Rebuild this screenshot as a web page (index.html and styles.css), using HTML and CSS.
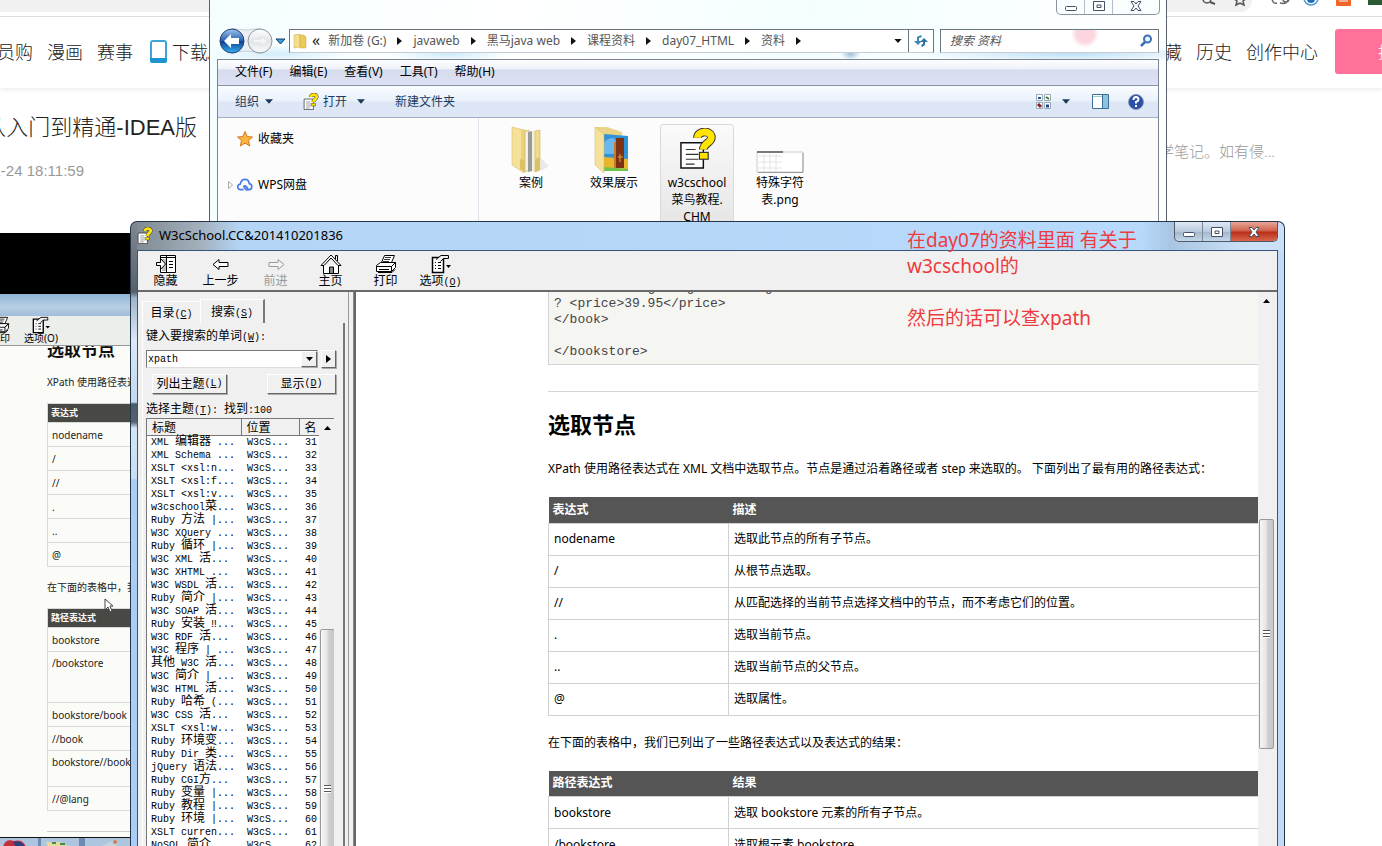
FILE: index.html
```html
<!DOCTYPE html>
<html lang="zh-CN">
<head>
<meta charset="utf-8">
<title>W3cSchool.CC</title>
<link rel="stylesheet" href="styles.css">
</head>
<body>
<svg class="defs" aria-hidden="true">
  <symbol id="chm" viewBox="0 0 38 42">
    <path d="M2 15h23v26H2z" fill="#fff" stroke="#111" stroke-width="1.500"/>
    <path d="M7 22h10M7 27h13M7 32h13M7 37h9" stroke="#333" stroke-width="1.200"/>
    <path d="M19 10C19 3 31 2 33 8c2 7-8 7-8 14" fill="none" stroke="#333" stroke-width="9"/>
    <path d="M19 10C19 3 31 2 33 8c2 7-8 7-8 14" fill="none" stroke="#ffe500" stroke-width="7"/>
    <rect x="21" y="25" width="9" height="7" fill="#ffe500" stroke="#333" stroke-width="1.200"/>
  </symbol>
  <symbol id="print" viewBox="0 0 22 20">
    <path d="M6.500 8.500l3-7h10l-3 7z" fill="#fff" stroke="#000"/>
    <path d="M10 3.500h6M9 5.500h6M8 7.500h6" stroke="#333"/>
    <path d="M1.500 11.500l4-3h15l-4 4v5h-15zM16.500 12.500l4-4v5l-4 4M1.500 12.500h15" fill="#fff" stroke="#000"/>
    <path d="M4 15.500h10M3 18.500h14l3-3" fill="none" stroke="#000"/>
  </symbol>
  <symbol id="options" viewBox="0 0 22 20">
    <path d="M2.500 3.500h11v15h-11z" fill="#fff" stroke="#000" stroke-width="1.500"/>
    <path d="M5 8.500h1M8 8.500h3M5 11.500h1M8 11.500h3M5 14.500h1M8 14.500h3" stroke="#000"/>
    <path d="M6 5.500l5-4h7.500v3h-5l-3 3" fill="#eee" stroke="#000"/>
    <path d="M16 11h5l-2.500 3z"/>
  </symbol>
  <symbol id="winmin" viewBox="0 0 14 12"><rect x="1.500" y="6.500" width="11" height="4" rx="1" fill="#fff" stroke="#445066"/></symbol>
  <symbol id="winmax" viewBox="0 0 14 12"><path d="M1.500 1.500h11v9h-11zM5 5h4v2.500H5z" fill="#fff" stroke="#445066"/></symbol>
  <symbol id="winx" viewBox="0 0 14 12"><path d="M2 1.500h3L7 4l2-2.500h3L9 6l3 4.500H9L7 8l-2 2.500H2L5 6z" fill="#fff" stroke="#445066"/></symbol>
  <symbol id="tri" viewBox="0 0 5 8"><path d="M0 0l5 4-5 4z"/></symbol>
  <symbol id="down" viewBox="0 0 9 5"><path d="M0 0h9L4.500 5z"/></symbol>
  <symbol id="up" viewBox="0 0 9 5"><path d="M0 5h9L4.500 0z"/></symbol>
</svg>

<div class="site">
  <div class="chrome">
    <div class="pill"></div>
    <svg class="ext" viewBox="0 0 200 14" aria-hidden="true">
      <circle cx="25" cy="-1" r="4" fill="none" stroke="#555" stroke-width="1.500"/><path d="M28 2l5 2" stroke="#555" stroke-width="2"/>
      <path d="M58-7l2 5h5l-4 3 1 4-4-2-4 2 1-4-4-3h5z" fill="none" stroke="#555" stroke-width="1.500"/>
      <path d="M90-1q1 5 5 4M98 3q8 2 8-5M101-1a3 3 0 0 1 6 0a3 3 0 0 1-6 0" fill="none" stroke="#666" stroke-width="1.500"/>
      <circle cx="129" cy="-2" r="7" fill="#fff" stroke="#4a9ad4" stroke-width="1.500"/><circle cx="129" cy="-1" r="4" fill="#1c6fb8"/>
      <rect x="154" y="-8" width="15" height="14" rx="1" fill="#f0652a"/><path d="M157 1h9M157-2h9" stroke="#fff"/>
      <rect x="186" y="-8" width="16" height="13" fill="#2c5a34"/>
    </svg>
  </div>
  <nav class="topnav">
    <div class="navleft">
      <a href="#">会员购</a><a href="#">漫画</a><a href="#">赛事</a>
      <a href="#" class="dl"><svg viewBox="0 0 17 23" width="17" height="23" aria-hidden="true"><rect x="1" y="1" width="15" height="20" rx="2" fill="#fff" stroke="#3da4d8" stroke-width="2"/><path d="M0 18h17v3q0 2-2 2H2q-2 0-2-2z" fill="#1b95cf"/></svg>下载App</a>
    </div>
    <div class="navright">
      <a href="#">收藏</a><a href="#">历史</a><a href="#">创作中心</a>
      <button class="post" type="button">投稿</button>
    </div>
  </nav>
  <header class="intro">
    <div class="introleft">
      <h1>从入门到精通-IDEA版</h1>
      <time>2020-11-24 18:11:59</time>
    </div>
    <p class="note">学笔记。如有侵...</p>
  </header>
  <section class="video">
    <div class="vbar"></div>
    <div class="vtitle"></div>
    <div class="vtools">
      <div class="vtool"><svg width="20" height="18"><use href="#print"/></svg><span>打印</span></div>
      <div class="vtool"><svg width="20" height="18"><use href="#options"/></svg><span>选项(O)</span></div>
    </div>
    <div class="vpage">
      <h3>选取节点</h3>
      <p>XPath 使用路径表达</p>
      <table>
        <thead><tr><th>表达式</th></tr></thead>
        <tbody><tr><td>nodename</td></tr><tr><td>/</td></tr><tr><td>//</td></tr><tr><td>.</td></tr><tr><td>..</td></tr><tr><td>@</td></tr></tbody>
      </table>
      <p>在下面的表格中，我</p>
      <table>
        <thead><tr><th>路径表达式</th></tr></thead>
        <tbody><tr><td>bookstore</td></tr><tr class="tall"><td>/bookstore</td></tr><tr><td>bookstore/book</td></tr><tr><td>//book</td></tr><tr class="mid"><td>bookstore//book</td></tr><tr><td>//@lang</td></tr></tbody>
      </table>
      <hr>
      <svg class="cursor" viewBox="0 0 10 15" width="10" height="15" aria-hidden="true"><path d="M1 1v11l3-3 2 5 2-1-2-5h3z" fill="#fff" stroke="#444"/></svg>
    </div>
    <div class="vtask"><div></div><div></div><div></div>
      <svg viewBox="0 0 130 9" width="130" height="9" aria-hidden="true"><path d="M3 9q2-9 11-6 9-2 12 6z" fill="#c22f3f"/><path d="M13 4q9-2 12 5H16z" fill="#27407f"/><path d="M46 4h14l10 5H48z" fill="#e5dc9b"/><path d="M52 5h4M60 6h5" stroke="#3d8a52" stroke-width="2"/><path d="M100 9l8-4 6-3 4 3-3 4z" fill="#c4d3dc"/><circle cx="115" cy="4" r="2" fill="#c9805a"/></svg>
    </div>
  </section>
</div>

<section class="explorer" aria-label="资料">
  <div class="controls light">
    <button type="button" aria-label="最小化"><svg width="14" height="12"><use href="#winmin"/></svg></button>
    <button type="button" aria-label="最大化"><svg width="14" height="12"><use href="#winmax"/></svg></button>
    <button type="button" class="wide" aria-label="关闭"><svg width="14" height="12"><use href="#winx"/></svg></button>
  </div>
  <div class="address">
    <svg class="backfwd" viewBox="0 0 68 28" width="68" height="28" aria-hidden="true">
      <defs><linearGradient id="ball" x1="0" y1="0" x2="0" y2="1"><stop offset="0" stop-color="#9dc4ee"/><stop offset=".48" stop-color="#2a62b4"/><stop offset=".52" stop-color="#0d3f94"/><stop offset="1" stop-color="#35b4f5"/></linearGradient>
      <linearGradient id="ghost" x1="0" y1="0" x2="0" y2="1"><stop offset="0" stop-color="#fff"/><stop offset=".5" stop-color="#e2e6ea"/><stop offset="1" stop-color="#f8f8f8"/></linearGradient></defs>
      <path d="M14 1.500q14 3 28 0v25q-14-5-28 0z" fill="#eceff3" stroke="#9aa" stroke-width=".5"/>
      <circle cx="14" cy="14" r="12" fill="url(#ball)" stroke="#28406e"/><path d="M6 14l7-7v4h8v6h-8v4z" fill="#fff"/>
      <circle cx="42" cy="14" r="12" fill="url(#ghost)" stroke="#8d949c"/><path d="M35 12h8V9l7 5-7 5v-3h-8z" fill="#f3f5f7" stroke="#dde1e5"/>
      <path d="M58 12h9l-4.500 5z" fill="#3aa0d8" stroke="#1c3b60"/>
    </svg>
    <div class="crumbs">
      <svg class="folder" viewBox="0 0 14 16" width="14" height="16" aria-hidden="true"><path d="M1 2l6-1v13l-6 1z" fill="#f5de8c" stroke="#c9a94a" stroke-width=".5"/><path d="M7 2h4l2 2v11H7z" fill="#ecc95c" stroke="#c9a94a" stroke-width=".5"/></svg>
      <span class="chev">«</span>
      <a href="#">新加卷 (G:)</a><svg width="5" height="8"><use href="#tri"/></svg>
      <a href="#">javaweb</a><svg width="5" height="8"><use href="#tri"/></svg>
      <a href="#">黑马java web</a><svg width="5" height="8"><use href="#tri"/></svg>
      <a href="#">课程资料</a><svg width="5" height="8"><use href="#tri"/></svg>
      <a href="#">day07_HTML</a><svg width="5" height="8"><use href="#tri"/></svg>
      <a href="#">资料</a><svg width="5" height="8"><use href="#tri"/></svg>
      <svg class="drop" width="8" height="4"><use href="#down"/></svg>
      <button class="refresh" type="button" aria-label="刷新"><svg viewBox="0 0 16 14" width="16" height="14"><path d="M1 7l4 4 4-4H6V4l3-1-1-2-4 2v4z" fill="#3a86b8"/><path d="M7 8l4-4 4 4h-3v3l-3 2-1-2 2-1V8z" fill="#2d74a6"/></svg></button>
    </div>
    <label class="search"><input type="text" placeholder="搜索 资料" aria-label="搜索 资料">
      <svg viewBox="0 0 14 14" width="14" height="14" aria-hidden="true"><circle cx="8.500" cy="5" r="3.500" fill="#e8f4ff" stroke="#3a70b4" stroke-width="2"/><path d="M6 8l-4 4" stroke="#3a70b4" stroke-width="2.500"/></svg></label>
  </div>
  <div class="exbody">
    <div class="menubar"><button type="button">文件(F)</button><button type="button">编辑(E)</button><button type="button">查看(V)</button><button type="button">工具(T)</button><button type="button">帮助(H)</button></div>
    <div class="cmdbar">
      <button type="button">组织<svg width="8" height="5"><use href="#down"/></svg></button>
      <button type="button" class="open"><svg width="16" height="17"><use href="#chm"/></svg>打开<svg class="caret" width="8" height="5"><use href="#down"/></svg></button>
      <button type="button">新建文件夹</button>
      <div class="views">
        <svg viewBox="0 0 16 16" width="16" height="16" aria-hidden="true"><path d="M.5.500h6v6h-6zM8.500.500h6v6h-6zM.5 8.500h6v6h-6zM8.500 8.500h6v6h-6z" fill="#fff" stroke="#9ab"/><path d="M2 4h3" stroke="#258" stroke-width="2"/><path d="M10 3l3 2" stroke="#472" stroke-width="2"/><path d="M2 10l3 3" stroke="#822" stroke-width="3"/><path d="M10 12h3" stroke="#248" stroke-width="3"/></svg>
        <svg class="vc" width="8" height="5"><use href="#down"/></svg>
        <svg viewBox="0 0 17 15" width="17" height="15" aria-hidden="true"><path d="M.5.500h16v14H.5z" fill="#fff" stroke="#3c6d94"/><path d="M10 1h6v13h-6z" fill="#8cc3dd"/><path d="M1 2.500h9" stroke="#9cc"/><path d="M10.500 1v13" stroke="#3c6d94"/></svg>
        <svg viewBox="0 0 16 16" width="16" height="16" aria-hidden="true"><circle cx="8" cy="8" r="7.500" fill="#2b4fa8" stroke="#8a97b5"/><path d="M5.500 6q0-3 2.500-3t2.500 2.500Q10.500 7 8 8v1.500M8 11v2" fill="none" stroke="#fff" stroke-width="2"/></svg>
      </div>
    </div>
    <div class="panes">
      <aside>
        <div class="side"><svg viewBox="0 0 16 16" width="16" height="16" aria-hidden="true"><path d="M8 .5l2.200 5 5.300.5-4 3.600 1.200 5.400L8 12.200 3.300 15l1.200-5.400L.5 6l5.300-.5z" fill="#f9b43a" stroke="#d6772a"/></svg>收藏夹</div>
        <div class="side"><svg class="exp" viewBox="0 0 5 8" width="5" height="8" aria-hidden="true"><path d="M.5.500L4.500 4l-4 3.500z" fill="#fff" stroke="#aaa"/></svg><svg viewBox="0 0 17 14" width="16" height="14" aria-hidden="true"><path d="M7 12H4a3 3 0 0 1-.5-6Q4.500 1 8.500 1q4 0 4.500 4.500A3.300 3.300 0 0 1 13 12h-1M7 8q3-1 5 4-3 1-5-4" fill="none" stroke="#4b7de8" stroke-width="1.800"/></svg>WPS网盘</div>
      </aside>
      <div class="files">
        <figure><svg viewBox="0 0 40 48" width="40" height="48" aria-hidden="true"><path d="M30 32l8 8-8 5z" fill="#ddd" opacity=".6"/><path d="M1 1l12 3v43L1 39z" fill="#f6e19a" stroke="#d3b75e" stroke-width=".5"/><path d="M10 3l6 1v42l-6-2z" fill="#e9d27c"/><path d="M14 6l4-2v40l-4 2z" fill="#f4f1e4" stroke="#b8a566" stroke-width=".5"/><path d="M17 6l4-1v40l-4 1z" fill="#9a9a98"/><path d="M21 5l3-1v41l-3 1z" fill="#f3efd8"/><path d="M24 5l5-1v40l-5 2z" fill="#f2db88" stroke="#c7a94d" stroke-width=".5"/><path d="M9 33l5 2v11l-5-3zM24 33l5-2v13l-5 2z" fill="#dcc06a"/></svg><figcaption>案例</figcaption></figure>
        <figure><svg viewBox="0 0 40 48" width="40" height="48" aria-hidden="true"><path d="M1 1h12l15 5v10H1z" fill="#ead487"/><path d="M10 8l24 2v34l-24-2z" fill="#3192d8"/><path d="M10 16q10-8 12 0v12H10z" fill="#6ab8ec"/><path d="M10 31l24 2v11l-24-2z" fill="#e9b52c"/><path d="M22 12h8v30h-8z" fill="#7c3215"/><path d="M20 16h2v26h-2z" fill="#c77a2a"/><path d="M24 31h5M26 28v8" stroke="#e6a33e"/><path d="M10 41l24 2v2H10z" fill="#6fc44d"/><path d="M1 1l9 7v39l-9-8z" fill="#f6e19a" stroke="#d3b75e" stroke-width=".5"/></svg><figcaption>效果展示</figcaption></figure>
        <figure class="sel"><svg width="37" height="41"><use href="#chm"/></svg><figcaption>w3cschool<br>菜鸟教程.<br>CHM</figcaption></figure>
        <figure><svg viewBox="0 0 48 48" width="48" height="48" aria-hidden="true"><path d="M1 26h46v20H1z" fill="#fff" stroke="#ccc"/><path d="M2 46.500h45V27" fill="none" stroke="#999"/><path d="M1 26h26" stroke="#555" stroke-width="1.500"/><path d="M2 30h24M2 36h24M2 42h24M8 28v18M14 28v18M20 28v18" stroke="#e4e4e4"/></svg><figcaption>特殊字符<br>表.png</figcaption></figure>
      </div>
    </div>
  </div>
</section>

<section class="help" aria-label="W3cSchool.CC">
  <div class="htitle"><svg width="16" height="17" aria-hidden="true"><use href="#chm"/></svg><span>W3cSchool.CC&amp;201410201836</span></div>
  <div class="controls">
    <button type="button" aria-label="最小化"><svg width="14" height="12"><use href="#winmin"/></svg></button>
    <button type="button" aria-label="最大化"><svg width="14" height="12"><use href="#winmax"/></svg></button>
    <button type="button" class="wide red" aria-label="关闭"><svg width="14" height="12"><use href="#winx"/></svg></button>
  </div>
  <div class="client">
    <div class="htools">
      <button type="button"><svg viewBox="0 0 22 20" width="22" height="20"><path d="M5.500 1.500h15v17h-15z" fill="#fff" stroke="#000"/><path d="M11.500 2v16M6 3.500h14M14 7.500h4M14 10.500h4M14 13.500h4" stroke="#000"/><path d="M7 5h4v12H7z" fill="#bbb"/><path d="M1.500 8.500h4v-4l5 5.500-5 5.500v-4h-4z" fill="#fff" stroke="#000"/></svg><span>隐藏</span></button>
      <button type="button"><svg viewBox="0 0 22 20" width="22" height="20"><path d="M3 10.500l6-5v3h9v4H9v3z" fill="#fff" stroke="#000"/></svg><span>上一步</span></button>
      <button type="button" disabled><svg viewBox="0 0 22 20" width="22" height="20"><path d="M19 10.500l-6-5v3H4v4h9v3z" fill="#f4f4f4" stroke="#999"/></svg><span>前进</span></button>
      <button type="button"><svg viewBox="0 0 22 20" width="22" height="20"><path d="M3.500 11v8.500h15V11" fill="#fff" stroke="#000"/><path d="M1 11.500L11 1l10 10.500h-3L11 4l-7 7.500z" fill="#fff" stroke="#000"/><path d="M15.500 5V1.500h2V7" fill="none" stroke="#000"/><path d="M9.500 19v-6h4v6" fill="#888" stroke="#000"/></svg><span>主页</span></button>
      <button type="button"><svg width="22" height="20"><use href="#print"/></svg><span>打印</span></button>
      <button type="button"><svg width="22" height="20"><use href="#options"/></svg><span>选项<small>(<u>O</u>)</small></span></button>
    </div>
    <div class="split">
      <div class="left">
        <div class="tabs"><button type="button">目录<small>(<u>C</u>)</small></button><button type="button" class="on">搜索<small>(<u>S</u>)</small></button></div>
        <div class="panel">
          <label class="lbl" for="word">键入要搜索的单词<small>(<u>W</u>):</small></label>
          <div class="row combo">
            <div class="field"><input id="word" type="text" value="xpath"><button type="button" class="bevel" aria-label="展开"><svg width="7" height="4"><use href="#down"/></svg></button></div>
            <button type="button" class="bevel go" aria-label="更多"><svg width="5" height="8"><use href="#tri"/></svg></button>
          </div>
          <div class="row acts"><button type="button" class="bevel">列出主题<small>(<u>L</u>)</small></button><button type="button" class="bevel show">显示<small>(<u>D</u>)</small></button></div>
          <p class="lbl found">选择主题<small>(<u>T</u>): </small>找到<small>:100</small></p>
          <div class="list">
            <table>
              <thead><tr><th>标题</th><th>位置</th><th>名</th></tr></thead>
              <tbody>
                <tr><td>XML <i>编辑器</i> ...</td><td>W3cS...</td><td>31</td></tr>
                <tr><td>XML Schema ...</td><td>W3cS...</td><td>32</td></tr>
                <tr><td>XSLT &lt;xsl:n...</td><td>W3cS...</td><td>33</td></tr>
                <tr><td>XSLT &lt;xsl:f...</td><td>W3cS...</td><td>34</td></tr>
                <tr><td>XSLT &lt;xsl:v...</td><td>W3cS...</td><td>35</td></tr>
                <tr><td>w3cschool<i>菜</i>...</td><td>W3cS...</td><td>36</td></tr>
                <tr><td>Ruby <i>方法</i> |...</td><td>W3cS...</td><td>37</td></tr>
                <tr><td>W3C XQuery ...</td><td>W3cS...</td><td>38</td></tr>
                <tr><td>Ruby <i>循环</i> |...</td><td>W3cS...</td><td>39</td></tr>
                <tr><td>W3C XML <i>活</i>...</td><td>W3cS...</td><td>40</td></tr>
                <tr><td>W3C XHTML ...</td><td>W3cS...</td><td>41</td></tr>
                <tr><td>W3C WSDL <i>活</i>...</td><td>W3cS...</td><td>42</td></tr>
                <tr><td>Ruby <i>简介</i> |...</td><td>W3cS...</td><td>43</td></tr>
                <tr><td>W3C SOAP <i>活</i>...</td><td>W3cS...</td><td>44</td></tr>
                <tr><td>Ruby <i>安装</i> ‼...</td><td>W3cS...</td><td>45</td></tr>
                <tr><td>W3C RDF <i>活</i>...</td><td>W3cS...</td><td>46</td></tr>
                <tr><td>W3C <i>程序</i> | ...</td><td>W3cS...</td><td>47</td></tr>
                <tr><td><i>其他</i> W3C <i>活</i>...</td><td>W3cS...</td><td>48</td></tr>
                <tr><td>W3C <i>简介</i> | ...</td><td>W3cS...</td><td>49</td></tr>
                <tr><td>W3C HTML <i>活</i>...</td><td>W3cS...</td><td>50</td></tr>
                <tr><td>Ruby <i>哈希</i> (...</td><td>W3cS...</td><td>51</td></tr>
                <tr><td>W3C CSS <i>活</i>...</td><td>W3cS...</td><td>52</td></tr>
                <tr><td>XSLT &lt;xsl:w...</td><td>W3cS...</td><td>53</td></tr>
                <tr><td>Ruby <i>环境变</i>...</td><td>W3cS...</td><td>54</td></tr>
                <tr><td>Ruby Dir <i>类</i>...</td><td>W3cS...</td><td>55</td></tr>
                <tr><td>jQuery <i>语法</i>...</td><td>W3cS...</td><td>56</td></tr>
                <tr><td>Ruby CGI<i>方</i>...</td><td>W3cS...</td><td>57</td></tr>
                <tr><td>Ruby <i>变量</i> |...</td><td>W3cS...</td><td>58</td></tr>
                <tr><td>Ruby <i>教程</i> |...</td><td>W3cS...</td><td>59</td></tr>
                <tr><td>Ruby <i>环境</i> |...</td><td>W3cS...</td><td>60</td></tr>
                <tr><td>XSLT curren...</td><td>W3cS...</td><td>61</td></tr>
                <tr><td>NoSQL <i>简介</i>...</td><td>W3cS...</td><td>62</td></tr>
              </tbody>
            </table>
            <div class="bar"><svg class="arrow" width="7" height="4"><use href="#up"/></svg><div class="thumb low"><span class="grip"></span></div></div>
          </div>
        </div>
      </div>
      <div class="doc">
        <article>
<pre>? &lt;title lang="eng"&gt;Learning XML&lt;/title&gt;
? &lt;price&gt;39.95&lt;/price&gt;
&lt;/book&gt;

&lt;/bookstore&gt;</pre>
          <hr>
          <h2>选取节点</h2>
          <p>XPath 使用路径表达式在 XML 文档中选取节点。节点是通过沿着路径或者 step 来选取的。 下面列出了最有用的路径表达式：</p>
          <table>
            <thead><tr><th>表达式</th><th>描述</th></tr></thead>
            <tbody>
              <tr><td>nodename</td><td>选取此节点的所有子节点。</td></tr>
              <tr><td>/</td><td>从根节点选取。</td></tr>
              <tr><td>//</td><td>从匹配选择的当前节点选择文档中的节点，而不考虑它们的位置。</td></tr>
              <tr><td>.</td><td>选取当前节点。</td></tr>
              <tr><td>..</td><td>选取当前节点的父节点。</td></tr>
              <tr><td>@</td><td>选取属性。</td></tr>
            </tbody>
          </table>
          <p>在下面的表格中，我们已列出了一些路径表达式以及表达式的结果：</p>
          <table>
            <thead><tr><th>路径表达式</th><th>结果</th></tr></thead>
            <tbody>
              <tr><td>bookstore</td><td>选取 bookstore 元素的所有子节点。</td></tr>
              <tr><td>/bookstore</td><td>选取根元素 bookstore。</td></tr>
            </tbody>
          </table>
        </article>
        <div class="bar"><svg class="arrow" width="7" height="4"><use href="#up"/></svg><div class="thumb"><span class="grip"></span></div></div>
      </div>
    </div>
  </div>
  <div class="remark">在day07的资料里面 有关于<br>w3cschool的<br><br>然后的话可以查xpath</div>
</section>
</body>
</html>
```
FILE: styles.css
```css
* { box-sizing: border-box; }
body {
  margin: 0;
  height: 100vh;
  position: relative;
  overflow: hidden;
  background: #fff;
  color: #000;
  font: 12px/18px "Noto Sans", "Noto Sans CJK SC", sans-serif;
}
h1, h2, h3, p, figure, pre { margin: 0; }
button { margin: 0; padding: 0; border: 0; background: none; color: inherit; font: inherit; }
a { color: inherit; text-decoration: none; }
svg { flex: none; }
table { border-collapse: collapse; }
th { text-align: left; }
.defs { position: absolute; width: 0; height: 0; }

/* Web page in the background */
.site { height: 100%; display: flex; flex-direction: column; }
.chrome { height: 17px; flex: none; display: flex; border-bottom: 1px solid #dcdcde; overflow: hidden; background: #fff; }
.pill { flex: 1; height: 12px; margin-right: -70px; background: #f1f1f2; border-radius: 0 0 12px 0; }
.ext { width: 200px; height: 14px; }
.topnav {
  height: 71px;
  flex: none;
  display: flex;
  justify-content: space-between;
  align-items: center;
  padding-bottom: 2px;
  font-size: 18px;
  line-height: 26px;
  font-weight: 300;
  color: #212121;
  box-shadow: 0 2px 4px #eee;
  overflow: hidden;
}
.navleft, .navright { display: flex; align-items: center; gap: 14px; white-space: nowrap; }
.navleft { margin-left: -21px; }
.navright { margin-right: -71px; }
.dl { display: flex; align-items: center; gap: 5px; margin-left: 3px; }
.post { width: 118px; height: 45px; margin-left: 3px; border-radius: 3px; background: #ff7198; color: #fff; font-size: 16px; }
.intro { height: 145px; flex: none; display: flex; justify-content: space-between; }
.introleft { width: 197px; overflow: hidden; display: flex; flex-direction: column; align-items: flex-end; padding-top: 24px; white-space: nowrap; }
.introleft h1 { font: 300 22px/32px "Liberation Sans", "Noto Sans CJK SC", sans-serif; color: #222; }
.introleft time { margin: 16px 113px 0 0; font: 15px/22px "Liberation Sans", sans-serif; color: #999; }
.note { margin: 52px 107px 0 0; font-size: 15px; line-height: 22px; font-weight: 300; color: #999; }
.video { flex: 1; min-height: 0; width: 60%; display: flex; flex-direction: column; font-size: 10px; }
.vbar { height: 61px; flex: none; background: #000; }
.vtitle { height: 22px; flex: none; background: linear-gradient(#8fb4d8, #b9cfe4 60%, #9fbcdb); }
.vtools { height: 30px; flex: none; display: flex; gap: 15px; border-bottom: 1px solid #999; background: #eceeea; overflow: hidden; }
.vtool { display: flex; flex-direction: column; align-items: center; line-height: 12px; font-size: 10px; width: 32px; white-space: nowrap; }
.vtool svg { margin-bottom: -2px; }
.vtool:first-child { margin-left: -16px; }
.vtool:first-child + .vtool { margin-left: -6px; }
.vpage { flex: 1; min-height: 0; position: relative; overflow: hidden; padding-left: 47px; background: #fbfcf8; line-height: 14px; color: #222; }
.vpage h3 { margin-top: -10px; font-size: 17px; line-height: 28px; color: #111; }
.vpage p { margin: 11px 0 14px; }
.vpage table { width: 100%; border: 1px solid #d8dad6; margin-bottom: 13px; }
.vpage th { height: 19px; padding: 0 3px; background: #484945; color: #fff; font-size: 9px; line-height: 12px; }
.vpage td { height: 24px; padding: 0 4px; border-top: 1px solid #d8dad6; vertical-align: middle; }
.vpage .tall td { height: 51px; vertical-align: top; padding-top: 4px; }
.vpage .mid td { height: 36px; vertical-align: top; padding-top: 4px; }
.vpage hr { margin: 20px 0 0; border: 0; border-top: 1px solid #ccc; }
.cursor { position: absolute; left: 104px; top: 252px; }
.vtask { height: 9px; flex: none; position: relative; display: flex; gap: 3px; border-top: 1px solid #111; background: #6d8db0; }
.vtask div { width: 38px; background: #adc5de; }
.vtask div + div + div { width: 46px; margin-left: 3px; }
.vtask svg { position: absolute; left: 0; top: 0; }

/* File explorer window */
.explorer {
  position: absolute;
  left: 209px;
  right: 215px;
  top: 0;
  height: 240px;
  display: flex;
  flex-direction: column;
  padding: 0 7px;
  border: solid #56606c;
  border-width: 0 1px;
  background:
    radial-gradient(ellipse 70px 8px at 7% 54px, #d3ecfb, transparent),
    radial-gradient(ellipse 60px 8px at 25% 54px, #cdeafa, transparent),
    radial-gradient(ellipse 10px 6px at 67% 54px, #9fbfdc, transparent),
    radial-gradient(ellipse 160px 8px at 90% 54px, #bfe0f6, transparent),
    linear-gradient(100deg, #f4feff, #fff 30%, #f4feff 60%, #fff);
}
.controls { position: absolute; right: 6px; top: 0; display: flex; height: 20px; border: 1px solid #4d5a6c; border-top: 0; border-radius: 0 0 5px 5px; overflow: hidden; background: linear-gradient(#dfe9f4, #b9cadd 50%, #a3b6cc 52%, #c5d8ea); }
.controls button { width: 28px; display: flex; align-items: center; justify-content: center; border-right: 1px solid #7b8899; }
.controls .wide { width: 46px; border-right: 0; }
.controls .red { background: linear-gradient(#e8a79a, #cf5f4a 48%, #b92d16 52%, #d8664c); }
.light { height: 15px; background: #fafeff; border-color: #8a939e; }
.light button { border-color: #b4bcc6; align-items: flex-start; }
.address { height: 24px; margin: 29px 0 6px; flex: none; display: flex; align-items: center; }
.backfwd { margin: 0 3px 0 1px; }
.crumbs { flex: 1; height: 24px; display: flex; align-items: center; gap: 11px; padding-left: 3px; border: 1px solid #6b7580; border-bottom-color: #c3ccd4; background: #fff; color: #555; white-space: nowrap; }
.crumbs .folder { margin-right: -6px; }
.chev { font-size: 16px; line-height: 18px; color: #222; margin-right: -3px; margin-top: -3px; }
.crumbs .drop { margin-left: auto; margin-right: -5px; }
.crumbs > svg { fill: #111; }
.refresh { width: 25px; height: 22px; border-left: 1px solid #6b7580; display: flex; align-items: center; justify-content: center; }
.search { width: 219px; height: 24px; margin-left: 6px; display: flex; align-items: center; padding: 0 5px 0 9px; border: 1px solid #6b7580; border-bottom-color: #c3ccd4; background: radial-gradient(circle 14px at 144px 4px, #fcd6df 60%, transparent), #fff; }
.search input { flex: 1; min-width: 0; padding: 0; border: 0; background: none; font: italic 12px/18px "Noto Sans", "Noto Sans CJK SC", sans-serif; }
.search input::placeholder { color: #555; opacity: 1; }
.exbody { flex: 1; min-height: 0; display: flex; flex-direction: column; border: 1px solid #7b8591; border-bottom: 0; background: #fcfcfc; }
.menubar { height: 26px; flex: none; display: flex; align-items: center; gap: 17px; padding: 0 0 2px 17px; border-bottom: 1px solid #8b94a8; background: linear-gradient(#fcfdff, #f0f3fa 35%, #d5dcee 40%, #dde2f4); }
.cmdbar { height: 32px; flex: none; display: flex; align-items: center; padding: 0 14px 0 17px; border-bottom: 1px solid #9fb0c8; background: linear-gradient(#fafdff, #eaf1fb 48%, #dce6f5 52%, #dfe7f6); color: #1e395b; }
.cmdbar button { display: flex; align-items: center; gap: 6px; margin-right: 30px; }
.cmdbar .open { gap: 4px; }
.cmdbar .caret { margin-left: 6px; }
.cmdbar svg { fill: #1e395b; }
.views { margin-left: auto; display: flex; align-items: center; }
.views .vc { margin: 0 22px 0 10px; }
.views svg + svg + svg + svg { margin-left: 19px; }
.panes { flex: 1; min-height: 0; display: flex; }
aside { width: 261px; border-right: 1px solid #dde3ea; padding-top: 12px; }
.side { position: relative; display: flex; align-items: center; gap: 5px; height: 18px; margin: 0 0 28px 19px; }
.exp { position: absolute; left: -9px; top: 5px; }
.files { flex: 1; display: flex; align-items: flex-start; gap: 9px; padding: 6px 0 0 15px; overflow: hidden; }
figure { width: 74px; padding-top: 2px; text-align: center; }
figure svg { display: block; margin: 0 auto; }
figcaption { line-height: 17px; }
.sel { height: 110px; border: 1px solid #d9d9d9; border-radius: 3px; padding-top: 3px; background: linear-gradient(#fafafa, #e4e4e4); }
.sel svg { margin-bottom: 5px; }

/* Help viewer window */
.help {
  position: absolute;
  left: 130px;
  right: 97px;
  top: 221px;
  bottom: 0;
  display: flex;
  flex-direction: column;
  padding: 0 6px;
  border: 1px solid #24364a;
  border-bottom: 0;
  border-radius: 7px 7px 0 0;
  background:
    linear-gradient(#8a949e00 0, #6e7780 30px, #566069 70px, #9fb4c8 76px, #dbe8f5 118px, #c3d8ee 180px, #4c5a68 182px, #55626f 200px, #d5e4f2 206px, #c9dff5 256px, #a9cdf5 258px) left / 6px 100% no-repeat,
    linear-gradient(90deg, #7d878e, #a3b1bd 70px, #b5d5f6 110px, #b7d9fb 1010px, #a9c5e2 1040px, #c9e0f7 1110px) top / 100% 29px no-repeat,
    #c3daf6;
}
.htitle { height: 28px; flex: none; display: flex; align-items: center; gap: 6px; padding-bottom: 2px; font-size: 13px; }
.controls:not(.light) { right: 6px; }
.client { flex: 1; min-height: 0; display: flex; flex-direction: column; border: 1px solid #35557c; border-bottom: 0; background: #f0f0f0; }
small { font: 10px/10px "Liberation Mono", monospace; white-space: pre; }
.htools { height: 41px; flex: none; display: flex; padding-top: 3px; border-bottom: 2px solid #6a6a6a; }
.htools button { width: 55px; display: flex; flex-direction: column; align-items: center; line-height: 14px; white-space: nowrap; }
.htools button[disabled] { color: #999; }
.split { flex: 1; min-height: 0; display: flex; }
.left { width: 216px; flex: none; padding: 7px 8px 0 4px; display: flex; flex-direction: column; border-right: 1px solid #888; box-shadow: inset -4px 0 #f0f0f0, inset -5px 0 #999; }
.tabs { display: flex; align-items: flex-end; height: 24px; flex: none; }
.tabs button { height: 22px; width: 58px; border-top: 1px solid #fff; border-left: 1px solid #fff; }
.tabs .on { height: 24px; width: 65px; border-right: 2px solid #777; }
.panel { flex: 1; min-height: 0; display: flex; flex-direction: column; padding: 4px 7px 0 3px; border-left: 1px solid #fff; border-right: 2px solid #777; }
.lbl { line-height: 18px; }
.row { display: flex; justify-content: space-between; }
.combo { margin-top: 5px; height: 18px; flex: none; }
.field { width: 172px; display: flex; border: 1px solid #777; border-right-color: #ddd; border-bottom-color: #ddd; background: #fff; }
.field input { flex: 1; min-width: 0; border: 0; padding: 2px 1px 0; background: none; font: 10px/14px "Liberation Mono", monospace; }
.field .bevel { width: 16px; }
.bevel { display: flex; align-items: center; justify-content: center; background: #f0f0f0; border: 1px solid #fff; border-right-color: #666; border-bottom-color: #666; box-shadow: 1px 1px #aaa; }
.go { width: 15px; }
.acts { margin: 6px 0 6px 6px; height: 20px; flex: none; }
.acts .bevel { width: 75px; }
.acts .show { width: 69px; }
.found { line-height: 18px; }
.list { flex: 1; min-height: 0; display: flex; justify-content: space-between; margin-right: 2px; border: 1px solid #777; border-right: 0; border-bottom: 0; background: #fff; overflow: hidden; }
.list table { width: 172px; height: 0; table-layout: fixed; font: 10px/13px "Liberation Mono", monospace; }
.list th { height: 16px; padding: 0 0 0 5px; white-space: nowrap; background: #f0f0f0; border-right: 1px solid #777; border-bottom: 1px solid #777; font: 12px/15px "Noto Sans CJK SC", sans-serif; }
.list th:nth-child(1) { width: 94px; }
.list th:nth-child(2) { width: 58px; }
.list th:nth-child(3) { width: 20px; border-right: 0; }
.list td { height: 13px; padding: 0 0 0 4px; white-space: nowrap; }
.list td:nth-child(2) { padding-left: 6px; }
.list td:nth-child(3) { padding: 0 2px 0 0; text-align: right; }
.list i { font: normal 12px/0 "Noto Sans CJK SC", sans-serif; }
.bar { width: 16px; flex: none; display: flex; flex-direction: column; align-items: center; padding-top: 7px; background: #f0f0f0; }
.thumb { width: 15px; height: 230px; margin-top: 216px; flex: none; display: flex; align-items: center; justify-content: center; border: 1px solid #999; border-radius: 2px; background: linear-gradient(90deg, #f6f6f6, #e6e6e8 45%, #cfcfd2 60%, #c6c6c8); }
.low { height: 320px; margin-top: 199px; }
.grip { width: 7px; height: 8px; background: repeating-linear-gradient(#555 0 1px, #fff 1px 3px); }
.doc { flex: 1; min-width: 0; display: flex; border-left: 2px solid #666; background: #fff; }
.doc .bar { width: 19px; padding-right: 3px; }
article { flex: 1; min-width: 0; overflow: hidden; padding-left: 192px; }
pre { margin-top: -12px; padding: 0 5px 4px; background: #f5f5f2; border: 1px solid #d4d4d4; border-top: 0; border-right: 0; font: 13px/16px "Liberation Mono", monospace; color: #444; }
article hr { margin: 26px 0 0; border: 0; border-top: 1px solid #d4d4d4; }
h2 { margin: 16px 0 20px; font-size: 22px; line-height: 32px; }
article p { margin: 18px 0 19px; line-height: 18px; white-space: nowrap; }
article table { width: 100%; }
article th { height: 26px; padding: 0 4px; background: #555; color: #fff; line-height: 18px; }
article th:first-child { width: 180px; }
article td { height: 32px; padding: 0 5px; border: 1px solid #d0d2d2; border-right: 0; line-height: 18px; }

/* Caption laid over the help viewer */
.remark { position: absolute; left: 776px; top: 5px; font-size: 19px; line-height: 26px; color: #ee3b3f; white-space: nowrap; }
```
